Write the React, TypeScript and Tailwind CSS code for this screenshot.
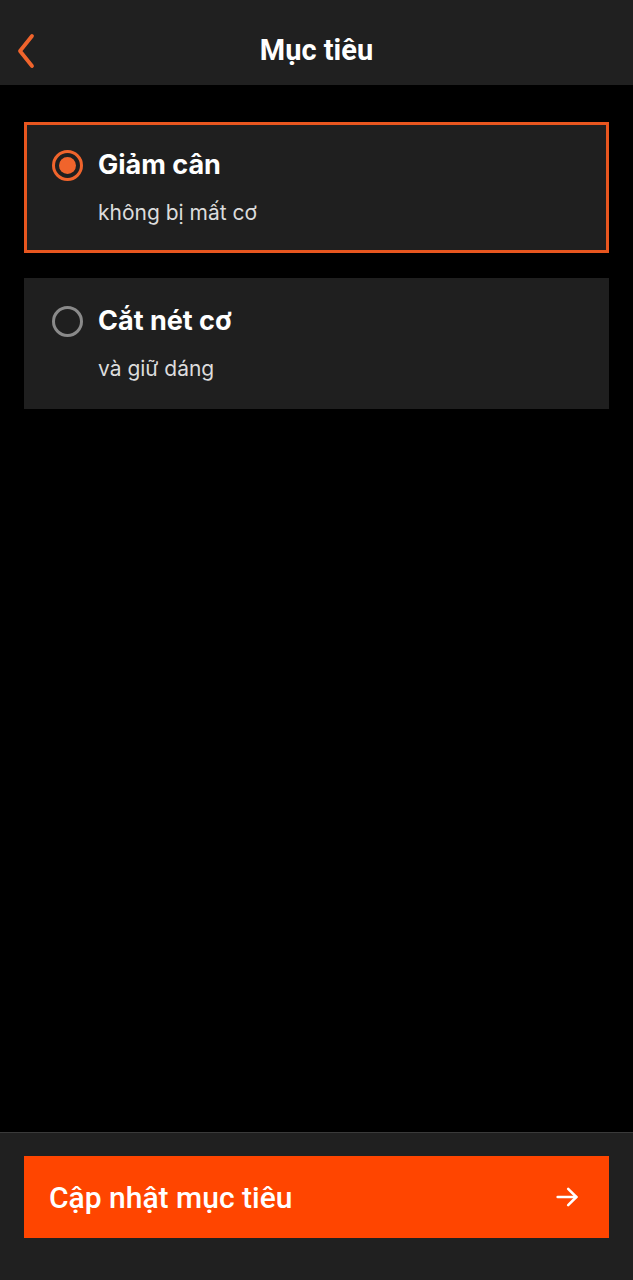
import React from "react";

function Radio({ checked }: { checked: boolean }) {
  return checked ? (
    <div className="w-[31px] h-[31px] rounded-full border-[3px] border-[#f0642c] flex items-center justify-center shrink-0">
      <div className="w-[17px] h-[17px] rounded-full bg-[#f0642c]" />
    </div>
  ) : (
    <div className="w-[31px] h-[31px] rounded-full border-[3px] border-[#8a8a8a] shrink-0" />
  );
}

function Option({ title, sub, checked }: { title: string; sub: string; checked: boolean }) {
  return (
    <div
      className={
        "bg-[#1f1f1f] h-[131px] pl-[25px] pr-[25px] pt-[22px] " +
        (checked ? "border-[3px] border-[#e8561f]" : "border-[3px] border-transparent")
      }
    >
      <div className="flex items-center gap-[15px]">
        <Radio checked={checked} />
        <div className="text-white text-[27px] font-bold leading-[36px] font-['Inter']">{title}</div>
      </div>
      <div className="ml-[46px] mt-[16px] text-[#dcdcdc] text-[21px] leading-[28px] font-['Inter']">{sub}</div>
    </div>
  );
}

export default function App() {
  return (
    <div className="w-[633px] h-[1280px] bg-black flex flex-col font-['Roboto',sans-serif]">
      <div className="h-[85px] bg-[#202020] relative flex items-center justify-center shrink-0">
        <svg className="absolute left-[15px] top-[33px]" width="22" height="36" viewBox="0 0 22 36">
          <path d="M17 3 L5 18 L17 33" stroke="#f0642c" strokeWidth="3.8" fill="none" strokeLinecap="round" strokeLinejoin="round" />
        </svg>
        <div className="text-white text-[29px] font-bold mt-[15px] leading-[36px]">Mục tiêu</div>
      </div>
      <div className="flex-1 px-[24px] pt-[37px] flex flex-col gap-[25px]">
        <Option title="Giảm cân" sub="không bị mất cơ" checked />
        <Option title="Cắt nét cơ" sub="và giữ dáng" checked={false} />
      </div>
      <div className="h-[148px] bg-[#202020] border-t border-[#3a3a3a] px-[24px] pt-[23px] shrink-0">
        <div className="h-[82px] bg-[#ff4500] flex items-center justify-between pl-[25px] pr-[28px]">
          <div className="text-white text-[30px] font-medium">Cập nhật mục tiêu</div>
          <svg width="28" height="28" viewBox="0 0 24 24" fill="none" stroke="white" strokeWidth="2.2" strokeLinecap="round" strokeLinejoin="round">
            <path d="M4 12h16" />
            <path d="M13 5l7 7-7 7" />
          </svg>
        </div>
      </div>
    </div>
  );
}
